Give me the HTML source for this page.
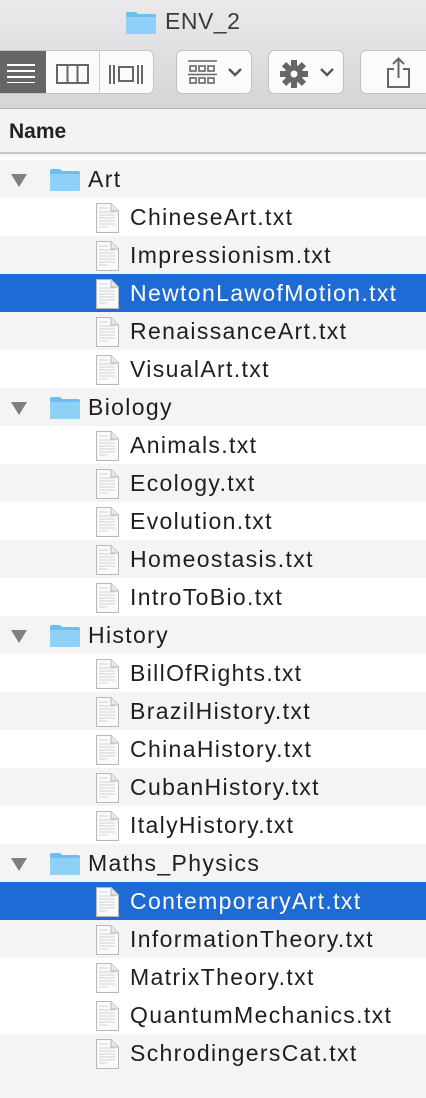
<!DOCTYPE html>
<html><head><meta charset="utf-8"><style>
*{margin:0;padding:0;box-sizing:border-box}
body{width:426px;height:1098px;overflow:hidden;background:#f4f4f4;font-family:"Liberation Sans",Arial,sans-serif;position:relative}
.top{position:absolute;left:0;top:0;width:426px;height:109px;background:linear-gradient(#ebe9eb,#d6d4d6);border-bottom:1px solid #b4b2b4}
.title{position:absolute;left:165px;top:8px;font-size:23px;color:#3a3a3a;letter-spacing:0.5px}
.tf{position:absolute;left:125px;top:11px}
.btn{position:absolute;top:50px;height:44px;background:#fbfbfb;border:1px solid #c4c2c4;border-radius:6px}
.hdr{position:absolute;left:0;top:110px;width:426px;height:44px;background:#f3f3f3;border-bottom:2px solid #c8c8c8}
.hdr span{position:absolute;left:9px;top:10px;font-size:21px;font-weight:bold;color:#222}
.gap{position:absolute;left:0;top:156px;width:426px;height:4px;background:#fff}
.row{position:absolute;left:0;width:426px;height:38px;font-size:23px;letter-spacing:1.35px;color:#1e1e1e}
.row.w{background:#fff}.row.g{background:#f4f4f4}.row.s{background:#1f6bd6;color:#fff}
.row .t{position:absolute;top:6px}
.tri{position:absolute;left:11px;top:14px;width:0;height:0;border-left:8px solid transparent;border-right:8px solid transparent;border-top:13px solid #808080}
.fold{position:absolute;left:49px;top:8px}
.doc{position:absolute;left:95px;top:5px}
</style></head><body>
<div class="top">
<svg class="tf" width="32" height="24" viewBox="0 0 32 24"><path d="M1 3 Q1 1 3 1 H11 L13 3 H29 Q31 3 31 5 V22 Q31 23 30 23 H2 Q1 23 1 22Z" fill="#6cbdf1"/><rect x="1" y="6" width="30" height="17" rx="1" fill="#8ed0f7"/></svg>
<div class="title">ENV_2</div>
<div class="btn" style="left:-6px;width:160px;overflow:hidden">
 <div style="position:absolute;left:0;top:0;width:51px;height:44px;background:#666"></div>
 <svg style="position:absolute;left:10px;top:12px" width="30" height="20"><g stroke="#fff" stroke-width="2"><line x1="2" y1="2" x2="30" y2="2"/><line x1="2" y1="8" x2="30" y2="8"/><line x1="2" y1="14" x2="30" y2="14"/><line x1="2" y1="20" x2="30" y2="20"/></g></svg>
 <div style="position:absolute;left:104px;top:0;width:1px;height:44px;background:#d0d0d0"></div>
 <svg style="position:absolute;left:61px;top:12px" width="34" height="22"><rect x="1" y="2" width="31" height="18" fill="none" stroke="#666" stroke-width="2"/><line x1="11.5" y1="2" x2="11.5" y2="20" stroke="#666" stroke-width="2"/><line x1="21.5" y1="2" x2="21.5" y2="20" stroke="#666" stroke-width="2"/></svg>
 <svg style="position:absolute;left:112px;top:12px" width="40" height="22"><g stroke="#666" stroke-width="2" fill="none"><line x1="3" y1="2" x2="3" y2="21"/><line x1="7" y1="2" x2="7" y2="21"/><rect x="12" y="4" width="14" height="14"/><line x1="31" y1="2" x2="31" y2="21"/><line x1="35" y1="2" x2="35" y2="21"/></g></svg>
</div>
<div class="btn" style="left:176px;width:76px">
 <svg style="position:absolute;left:11px;top:9px" width="30" height="26"><g stroke="#666" stroke-width="1.6" fill="none"><rect x="2" y="6" width="6" height="5"/><rect x="11" y="6" width="6" height="5"/><rect x="20" y="6" width="6" height="5"/><rect x="2" y="18" width="6" height="5"/><rect x="11" y="18" width="6" height="5"/><rect x="20" y="18" width="6" height="5"/><line x1="0" y1="1" x2="29" y2="1"/><line x1="0" y1="14.5" x2="29" y2="14.5"/></g></svg>
 <svg style="position:absolute;left:51px;top:17px" width="14" height="10"><path d="M1 1 L7 7 L13 1" stroke="#555" stroke-width="2.4" fill="none"/></svg>
</div>
<div class="btn" style="left:268px;width:76px">
 <svg style="position:absolute;left:10px;top:8px" width="30" height="30" viewBox="-15 -15 30 30"><g fill="#666"><circle r="9"/><rect x="-3" y="-14" width="6" height="28"/><rect x="-3" y="-14" width="6" height="28" transform="rotate(45)"/><rect x="-3" y="-14" width="6" height="28" transform="rotate(90)"/><rect x="-3" y="-14" width="6" height="28" transform="rotate(135)"/></g><circle r="3.5" fill="#fbfbfb"/></svg>
 <svg style="position:absolute;left:51px;top:17px" width="14" height="10"><path d="M1 1 L7 7 L13 1" stroke="#555" stroke-width="2.4" fill="none"/></svg>
</div>
<div class="btn" style="left:360px;width:80px">
 <svg style="position:absolute;left:25px;top:6px" width="26" height="32"><g stroke="#666" stroke-width="2" fill="none"><path d="M8 12 H2 V30 H23 V12 H17"/><path d="M12.5 21 V2 M7 7 L12.5 1.5 L18 7"/></g></svg>
</div>
</div>
<div class="hdr"><span>Name</span></div>
<div class="gap"></div>
<svg width="0" height="0" style="position:absolute"><defs>
<symbol id="f" viewBox="0 0 32 24"><path d="M1 3 Q1 1 3 1 H11 L13 3 H29 Q31 3 31 5 V22 Q31 23 30 23 H2 Q1 23 1 22Z" fill="#6cbdf1"/><rect x="1" y="6" width="30" height="17" rx="1" fill="#8ed0f7"/></symbol>
<symbol id="d" viewBox="0 0 24 30"><path d="M1.5 0.5 H16 L23.5 8 V29.5 H1.5Z" fill="#fafafa" stroke="#b8b8b8"/><path d="M16 0.5 V8 H23.5" fill="#e8e8e8" stroke="#b8b8b8"/><g stroke="#c8c8c8" stroke-width="0.8"><line x1="4" y1="5" x2="13" y2="5"/><line x1="4" y1="9" x2="20" y2="9"/><line x1="4" y1="12" x2="20" y2="12"/><line x1="4" y1="15" x2="20" y2="15"/><line x1="4" y1="18" x2="20" y2="18"/><line x1="4" y1="21" x2="20" y2="21"/><line x1="4" y1="24" x2="12" y2="24"/></g></symbol>
</defs></svg>
<div id="rows"></div>
<script>
var items=[["Art",1],["ChineseArt.txt"],["Impressionism.txt"],["NewtonLawofMotion.txt",0,1],["RenaissanceArt.txt"],["VisualArt.txt"],["Biology",1],["Animals.txt"],["Ecology.txt"],["Evolution.txt"],["Homeostasis.txt"],["IntroToBio.txt"],["History",1],["BillOfRights.txt"],["BrazilHistory.txt"],["ChinaHistory.txt"],["CubanHistory.txt"],["ItalyHistory.txt"],["Maths_Physics",1],["ContemporaryArt.txt",0,1],["InformationTheory.txt"],["MatrixTheory.txt"],["QuantumMechanics.txt"],["SchrodingersCat.txt"]];
var h="";
items.forEach(function(it,i){
 var c=it[2]?"s":(i%2?"w":"g");
 if(i==22)c="w"; if(i==23)c="g";
 h+='<div class="row '+c+'" style="top:'+(160+38*i)+'px">';
 if(it[1]) h+='<div class="tri"></div><svg class="fold" width="32" height="24"><use href="#f"/></svg><span class="t" style="left:88px">'+it[0]+'</span>';
 else h+='<svg class="doc" width="24" height="30"><use href="#d"/></svg><span class="t" style="left:130px">'+it[0]+'</span>';
 h+='</div>';
});
document.getElementById("rows").innerHTML=h;
</script>
</body></html>
